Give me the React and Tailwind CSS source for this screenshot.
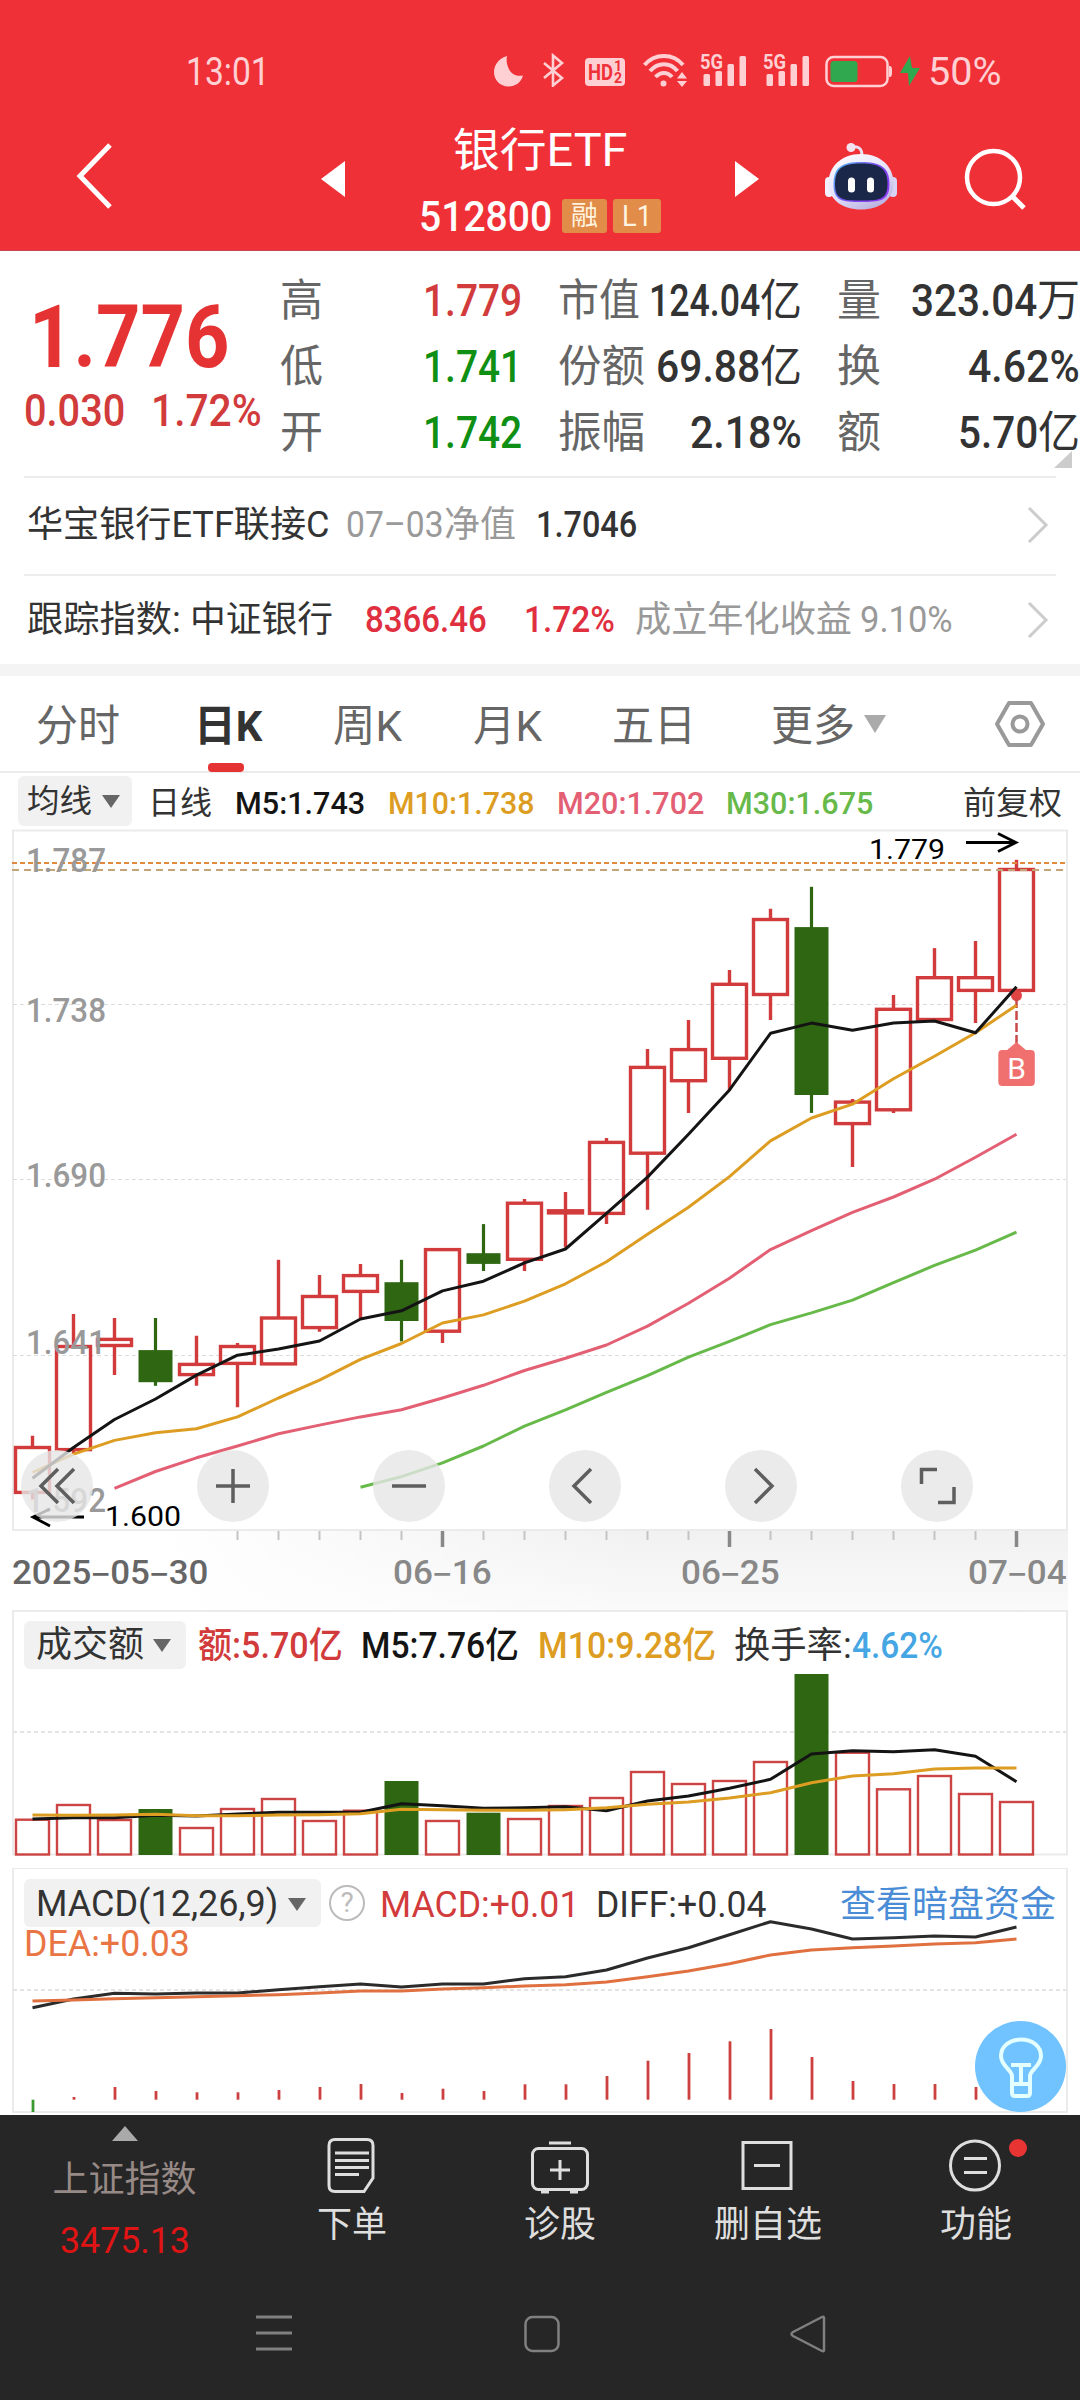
import { useLayoutEffect, useRef } from "react";
import clsx from "clsx";

const STEP = 41;
const FIRST = 32.5;
const xAt = (i) => FIRST + STEP * i;

const RED = "#d23b3b";
const GREEN = "#2f6612";
const BLACK = "#141414";
const ORANGE = "#dd9d22";
const PINK = "#e36074";
const LIME = "#67b94a";

// high, body top, body bottom, low
const candles = [
  [606.8, 618.5, 663.4, 670.6],
  [484.9, 517.5, 620.6, 625.2],
  [489, 510.4, 516.5, 546.1],
  [489, 521.1, 553.2, 556.8, true],
  [506.8, 535.4, 545.6, 556.8],
  [514, 517.5, 534.4, 578.2],
  [430.8, 489, 534.9, 534.9],
  [446.1, 467.5, 498.6, 502.7],
  [434.9, 446.6, 462.4, 489],
  [430.8, 453.2, 492, 512.4, true],
  [420.6, 420.6, 502.2, 514],
  [395.1, 424.2, 434.9, 442, true],
  [370.1, 374.2, 430.3, 442],
  [362.9, 381.8, 383.9, 418.5],
  [308.9, 313.4, 384.4, 395.1],
  [220.1, 238.4, 324.2, 380.8],
  [191, 220.6, 251.7, 283.9],
  [141, 155.3, 229.3, 261.4],
  [79.8, 90.5, 165.5, 191],
  [57.8, 98.1, 266, 283.9, true],
  [270.1, 273.1, 294.6, 337.9],
  [166, 180.3, 280.8, 283.9],
  [119.1, 148.7, 190.5, 190.5],
  [111.9, 148.7, 161.4, 194.1],
  [30.8, 40.5, 161.4, 161.4],
];

const ma5 = [
  649.2, 618.5, 590.5, 570, 546.1, 526.2, 520, 512, 490, 481.8, 461.9, 452.2,
  433.9, 420, 384.4, 348.1, 305.3, 260.9, 204.3, 194.1, 201.2, 194.1, 192,
  203.8, 157.8,
];
const ma10 = [
  643.5, 625.2, 611.4, 603.7, 599.7, 587.9, 569, 551.2, 530.3, 514.5, 494,
  485.9, 472.1, 454.8, 432.8, 405.3, 378.2, 347.6, 311.9, 289, 275.2, 249.7,
  227.2, 203.8, 176.2,
];
const ma20 = [
  659.4, 642.5, 628.8, 617, 604.8, 596.1, 587.9, 580.8, 569, 556.3, 541.5,
  529.3, 516, 497.1, 474.2, 449.2, 420.6, 401.7, 383.3, 368, 350.2, 328.2,
  305.3,
];
const ma30 = [
  658.3, 647.6, 633.9, 617, 597.1, 580.8, 563.4, 546.6, 528.2, 512.4, 495.6,
  483.9, 471.1, 453.7, 436.4, 421.1, 403.2,
];

const volumes = [
  209.7, 195, 210, 199, 218, 199, 189, 211, 200.7, 171, 211, 202.7, 209, 196,
  188, 162, 174, 171, 152, 64, 142.7, 179.3, 166, 184, 192,
];
const volumeM5 = [
  209, 207.7, 207.7, 205.3, 206, 204, 202.3, 202.3, 202.3, 193.7, 195.7, 198.3,
  197.7, 196.7, 200.7, 191, 186, 178.3, 169.3, 144, 140.7, 141.7, 139.7, 146.3,
  171.7,
];
const volumeM10 = [
  205, 205.3, 205, 204.3, 205.7, 205.7, 205, 204.7, 203.7, 199.3, 199.7, 200.3,
  200.3, 199.7, 197.7, 194.3, 192, 188, 182.7, 172.7, 166, 163.7, 159, 158, 158,
];

const diff = [
  139.7, 131, 125.3, 126, 125, 125, 121.7, 118.7, 116, 119, 116, 116, 110.7,
  108.7, 102, 90, 79.7, 66.7, 53.7, 61, 71, 69.7, 68, 69, 59,
];
const dea = [
  133, 132, 130.7, 129.7, 128.7, 127.7, 126.7, 125, 123, 123, 121, 119.7, 118,
  116.7, 114, 108.7, 103, 95.7, 87, 82, 79.7, 78, 76, 74.7, 71,
];
const histogram = [
  244, 229, 219, 223, 224.3, 224.3, 222, 219, 216, 225, 220.7, 223, 216.3,
  216.3, 208, 192.7, 185, 173.3, 161, 189, 213, 216, 216, 219, 207,
];

const priceLabels = [
  ["1.787", 43],
  ["1.738", 193],
  ["1.690", 358.3],
  ["1.641", 525.2],
  ["1.592", 682.8],
];

const points = (values, start = 0) =>
  values.map((v, i) => `${xAt(i + start)},${v}`).join(" ");

// One line of text squeezed to the width of its box.
function Fit({ className, children }) {
  const box = useRef(null);
  const text = useRef(null);

  useLayoutEffect(() => {
    const ratio = box.current.clientWidth / text.current.offsetWidth;
    text.current.style.transform = `scaleX(${ratio})`;
  }, [children]);

  return (
    <span className={clsx("block shrink-0 whitespace-nowrap", className)} ref={box}>
      <span className="inline-block origin-left" ref={text}>
        {children}
      </span>
    </span>
  );
}

function Line({ values, start, color, width = 3 }) {
  return (
    <polyline
      fill="none"
      points={points(values, start)}
      stroke={color}
      strokeLinejoin="round"
      strokeWidth={width}
    />
  );
}

function Caret({ className }) {
  return (
    <svg className={clsx("shrink-0", className)} preserveAspectRatio="none" viewBox="0 0 20 14">
      <path d="M0 0h20L10 14z" fill="currentColor" />
    </svg>
  );
}

function Signal() {
  return (
    <svg className="h-[34px] w-[47px] shrink-0 overflow-visible" fill="#ffd0d3" viewBox="0 0 47 34">
      <text
        fontFamily="Roboto"
        fontSize="20"
        fontWeight="700"
        lengthAdjust="spacingAndGlyphs"
        textLength="23"
        x="0"
        y="16"
      >
        5G
      </text>
      <rect height="12" rx="1.5" width="6.5" x="3.5" y="21" />
      <rect height="15" rx="1.5" width="6.5" x="15.5" y="18" />
      <rect height="22" rx="1.5" width="6.5" x="27.5" y="11" />
      <rect height="30" rx="1.5" width="6.5" x="39.5" y="3" />
    </svg>
  );
}

function StatusBar() {
  return (
    <div className="flex h-[112px] items-start pt-[53px] pl-[186px] text-[#ffd0d3]">
      <Fit className="w-[84px] pt-px text-[38px] leading-9">13:01</Fit>
      <svg className="ml-[223px] h-[34px] w-[32px] shrink-0" viewBox="0 0 32 34">
        <path d="M14 3C4 6 1 14 1 19c0 8 6 14.500 14.500 14.500 7 0 12.500-4 14.500-11C18 25 12 13 14 3z" fill="currentColor" />
      </svg>
      <svg className="ml-[18px] h-[34px] w-[22px] shrink-0" fill="none" stroke="currentColor" strokeWidth="2.600" viewBox="0 0 22 34">
        <path d="M1 10l18 15-9 7.500v-30L19 10 1 25" />
      </svg>
      <svg className="ml-[20px] h-[34px] w-[40px] shrink-0" viewBox="0 0 40 34">
        <rect fill="#ffd0d3" height="28" rx="4" width="40" y="5" />
        <g fill="#ef3138" fontFamily="Roboto" fontWeight="700">
          <text fontSize="22" lengthAdjust="spacingAndGlyphs" textLength="25" x="3" y="27">
            HD
          </text>
          <text fontSize="14" x="29" y="18">
            1
          </text>
          <text fontSize="14" x="29" y="30">
            2
          </text>
        </g>
      </svg>
      <svg className="ml-[18px] h-[34px] w-[45px] shrink-0" fill="none" stroke="currentColor" strokeWidth="4" viewBox="0 0 45 34">
        <path d="M1.500 12c10-12 29-12 38.500 0M7 18c8-9 20-9 27.500 0M12.500 24c5-5.500 12-5.500 16.500 0" />
        <circle cx="20.500" cy="30.500" fill="currentColor" r="3" stroke="none" />
        <path d="M34 25.500l5-6.500 5 6.500zM34 28h10l-5 6z" fill="currentColor" stroke="none" />
      </svg>
      <div className="ml-[12px] flex gap-4">
        <Signal />
        <Signal />
      </div>
      <svg className="ml-[15px] h-[36px] w-[68px] shrink-0" viewBox="0 0 68 36">
        <rect fill="none" height="29" rx="7" stroke="#ffd0d3" strokeWidth="2.500" width="61" x="1.500" y="4" />
        <rect fill="#2fa84f" height="21" rx="3.500" width="27" x="5.500" y="8" />
        <path d="M64 13c3 0 3 2 3 5.500S67 24 64 24z" fill="#ffd0d3" />
      </svg>
      <svg className="ml-[6px] h-[34px] w-[22px] shrink-0" viewBox="0 0 22 34">
        <path d="M11 3L1 20h8l1 13L21 15h-8z" fill="#2fa84f" />
      </svg>
      <Fit className="ml-[7px] w-[74px] pt-px text-[38px] leading-9">50%</Fit>
    </div>
  );
}

function Robot() {
  return (
    <svg className="h-[67px] w-[74px] shrink-0" viewBox="0 0 74 67">
      <defs>
        <linearGradient id="shell" x1="0" x2="0.600" y1="0" y2="1">
          <stop offset="0" stopColor="#ffffff" />
          <stop offset="0.600" stopColor="#e6e2fb" />
          <stop offset="1" stopColor="#bdb6e2" />
        </linearGradient>
        <linearGradient id="glow" x1="0" x2="1" y1="0" y2="0.600">
          <stop offset="0" stopColor="#54c8f2" />
          <stop offset="0.600" stopColor="#7a4df0" />
          <stop offset="1" stopColor="#8c3df5" />
        </linearGradient>
      </defs>
      <path d="M28 4c6-1 10 1 10 9" fill="none" stroke="#eadff2" strokeWidth="3" />
      <circle cx="27" cy="4.500" fill="#f3e3f0" r="4.500" />
      <rect fill="#f3f0ff" height="20" rx="4" width="8" x="1" y="34" />
      <rect fill="#d8d3f5" height="20" rx="4" width="8" x="65" y="34" />
      <path d="M37 11c20 0 32.500 13 32.500 29 0 17-14 26.500-32.500 26.500S4.500 57 4.500 40C4.500 24 17 11 37 11z" fill="url(#shell)" />
      <path d="M37 19c19 0 28.500 5 28.500 22S56 59 37 59 9.500 58 9.500 41 18 19 37 19z" fill="url(#glow)" />
      <path d="M37 20.500c18 0 26.500 4.500 26.500 20.500S55 57.500 37 57.500 11 57 11 41s8-20.500 26-20.500z" fill="#1b2748" />
      <rect fill="#fff" height="15" rx="3.500" width="7" x="24" y="34.500" />
      <rect fill="#fff" height="15" rx="3.500" width="7" x="43" y="34.500" />
    </svg>
  );
}

function Header() {
  return (
    <header className="h-[251px] border-b border-[#c34a55] bg-[#f03037] text-white">
      <StatusBar />
      <div className="flex h-[138px] items-start">
        <svg className="mt-[31px] ml-[75px] h-[66px] w-[38px] shrink-0" fill="none" stroke="currentColor" strokeWidth="5" viewBox="0 0 38 66">
          <path d="M35 2L5 33l30 31" />
        </svg>
        <svg className="mt-[49px] ml-[208px] h-[36px] w-[24px] shrink-0" viewBox="0 0 24 36">
          <path d="M24 0v36L0 18z" fill="currentColor" />
        </svg>
        <div className="ml-[74px] flex w-[242px] shrink-0 flex-col items-center">
          <Fit className="mt-[12px] -ml-px w-[174px] text-[46px] leading-[52px]">银行ETF</Fit>
          <div className="mt-[20px] flex items-center">
            <Fit className="mt-[2px] w-[133px] text-[42px] leading-[38px] font-medium">512800</Fit>
            <div className="ml-[10px] flex gap-[6px] text-[#fff4e0]">
              <span className="flex h-[34px] w-[45px] items-center justify-center rounded-[3px] bg-[#e18c48]">
                <Fit className="w-[27px] text-[27px] leading-8">融</Fit>
              </span>
              <span className="flex h-[34px] w-[48px] items-center justify-center rounded-[3px] bg-[#e18c48]">
                <Fit className="w-[30px] text-[29px] leading-8">L1</Fit>
              </span>
            </div>
          </div>
        </div>
        <svg className="mt-[49px] ml-[74px] h-[36px] w-[24px] shrink-0" viewBox="0 0 24 36">
          <path d="M0 0v36L24 18z" fill="currentColor" />
        </svg>
        <div className="mt-[31px] ml-[65px]">
          <Robot />
        </div>
        <svg className="mt-[35px] ml-[65px] h-[64px] w-[64px] shrink-0" fill="none" stroke="currentColor" strokeWidth="4.500" viewBox="0 0 64 64">
          <circle cx="30.500" cy="30.500" r="26.500" />
          <path d="M49 49l12 12" strokeWidth="5" />
        </svg>
      </div>
    </header>
  );
}

function Quote() {
  return (
    <section className="relative flex h-[225px] pt-[17px] text-[44px] leading-[66px]">
      <div className="w-[280px] shrink-0 font-medium text-[#d23b3b]">
        <Fit className="mt-[34px] ml-[29px] w-[200px] text-[88px] leading-[70px] font-bold text-[#e53333]">1.776</Fit>
        <div className="mt-[6px] ml-[24px] flex font-normal">
          <Fit className="w-[101px] leading-[66px] font-medium">0.030</Fit>
          <Fit className="ml-[26px] w-[111px] leading-[66px] font-medium">1.72%</Fit>
        </div>
      </div>
      <div className="w-[44px] shrink-0 text-[#666]">
        <Fit className="w-[43px]">高</Fit>
        <Fit className="w-[43px]">低</Fit>
        <Fit className="w-[43px]">开</Fit>
      </div>
      <div className="ml-[99px] w-[99px] shrink-0 font-medium text-[#0f8f14]">
        <Fit className="w-[99px] text-[#d23b3b]">1.779</Fit>
        <Fit className="w-[99px]">1.741</Fit>
        <Fit className="w-[99px]">1.742</Fit>
      </div>
      <div className="ml-[36px] w-[86px] shrink-0 text-[#666]">
        <Fit className="w-[82px]">市值</Fit>
        <Fit className="w-[87px]">份额</Fit>
        <Fit className="w-[87px]">振幅</Fit>
      </div>
      <div className="ml-[4px] flex w-[154px] shrink-0 flex-col items-end text-[#333]">
        <div className="flex">
          <Fit className="w-[111px] font-medium">124.04</Fit>
          <Fit className="w-[42px]">亿</Fit>
        </div>
        <div className="flex">
          <Fit className="w-[104px] font-medium">69.88</Fit>
          <Fit className="w-[42px]">亿</Fit>
        </div>
        <Fit className="w-[112px] font-medium">2.18%</Fit>
      </div>
      <div className="ml-[35px] w-[44px] shrink-0 text-[#666]">
        <Fit className="w-[44px]">量</Fit>
        <Fit className="w-[44px]">换</Fit>
        <Fit className="w-[44px]">额</Fit>
      </div>
      <div className="ml-[29px] flex w-[170px] shrink-0 flex-col items-end text-[#333]">
        <div className="flex">
          <Fit className="w-[126px] font-medium">323.04</Fit>
          <Fit className="w-[43px]">万</Fit>
        </div>
        <Fit className="w-[112px] font-medium">4.62%</Fit>
        <div className="flex">
          <Fit className="w-[80px] font-medium">5.70</Fit>
          <Fit className="w-[42px]">亿</Fit>
        </div>
      </div>
      <svg className="absolute right-[8px] bottom-[8px] h-[17px] w-[18px]" viewBox="0 0 18 17">
        <path d="M18 0v17H0z" fill="#ccc" />
      </svg>
    </section>
  );
}

function Chevron() {
  return (
    <svg className="mr-[31px] ml-auto h-[36px] w-[22px] shrink-0" fill="none" stroke="#ccc" strokeWidth="3" viewBox="0 0 22 36">
      <path d="M2 1l17 17L2 35" />
    </svg>
  );
}

function FundRows() {
  return (
    <section className="text-[36px] leading-[50px] text-[#333]">
      <div className="mx-6 h-[2px] bg-[#ededed]" />
      <div className="flex h-[96px] items-center pb-[2px]">
        <Fit className="ml-[27px] w-[303px]">华宝银行ETF联接C</Fit>
        <Fit className="ml-[16px] w-[98px] text-[#999]">07–03</Fit>
        <Fit className="w-[72px] text-[#999]">净值</Fit>
        <Fit className="ml-[20px] w-[101px] font-medium">1.7046</Fit>
        <Chevron />
      </div>
      <div className="mx-6 h-[2px] bg-[#ededed]" />
      <div className="flex h-[88px] items-center">
        <Fit className="ml-[27px] w-[154px]">跟踪指数:</Fit>
        <Fit className="ml-[9px] w-[143px]">中证银行</Fit>
        <Fit className="ml-[32px] w-[122px] font-medium text-[#e02f3e]">8366.46</Fit>
        <Fit className="ml-[37px] w-[91px] font-medium text-[#e02f3e]">1.72%</Fit>
        <Fit className="ml-[20px] w-[217px] text-[#999]">成立年化收益</Fit>
        <Fit className="ml-[8px] w-[93px] text-[#999]">9.10%</Fit>
        <Chevron />
      </div>
      <div className="h-[12px] bg-[#f4f4f4]" />
    </section>
  );
}

function Tabs() {
  return (
    <nav className="flex h-[97px] border-b-2 border-[#ebebeb] pt-[18px] text-[43px] leading-[64px] text-[#666]">
      <Fit className="ml-[36px] w-[84px]">分时</Fit>
      <div className="ml-[74px] w-[68px] shrink-0">
        <Fit className="w-[68px] font-bold text-[#333]">日K</Fit>
        <span className="mt-[5px] ml-[14px] block h-[9px] w-[36px] rounded-[4px] bg-[#e53333]" />
      </div>
      <Fit className="ml-[71px] w-[69px]">周K</Fit>
      <Fit className="ml-[71px] w-[69px]">月K</Fit>
      <Fit className="ml-[70px] w-[84px]">五日</Fit>
      <Fit className="ml-[75px] w-[84px]">更多</Fit>
      <Caret className="mt-[21px] ml-[9px] h-[18px] w-[22px] text-[#aaa]" />
      <svg className="mt-[5px] ml-[108px] h-[50px] w-[52px] shrink-0" fill="none" stroke="#999" strokeLinejoin="round" strokeWidth="4" viewBox="0 0 52 50">
        <path d="M15 4h22l12 21-12 21H15L3 25z" />
        <circle cx="26" cy="25" r="7.500" />
      </svg>
    </nav>
  );
}

function MaRow() {
  return (
    <div className="flex h-[56px] items-start pt-[3px] text-[32px] leading-[54px] text-[#333]">
      <div className="ml-[18px] flex h-[50px] w-[114px] items-center rounded-md bg-[#f1f1f1] pl-[9px]">
        <Fit className="w-[65px]">均线</Fit>
        <Caret className="ml-[10px] h-[13px] w-[18px] text-[#666]" />
      </div>
      <Fit className="ml-[16px] w-[64px]">日线</Fit>
      <Fit className="ml-[23px] w-[130px] font-medium text-[#141414]">M5:1.743</Fit>
      <Fit className="ml-[23px] w-[146px] font-medium text-[#dd9d22]">M10:1.738</Fit>
      <Fit className="ml-[23px] w-[147px] font-medium text-[#e36074]">M20:1.702</Fit>
      <Fit className="ml-[22px] w-[147px] font-medium text-[#67b94a]">M30:1.675</Fit>
      <Fit className="ml-[90px] w-[99px]">前复权</Fit>
    </div>
  );
}

function Candle({ index, data }) {
  const [high, top, bottom, low, falling] = data;
  const x = xAt(index);

  if (falling) {
    return (
      <g fill={GREEN}>
        <rect height={low - high} width="3.200" x={x - 1.6} y={high} />
        <rect height={bottom - top} width="34" x={x - 17} y={top} />
      </g>
    );
  }

  return (
    <g fill="none" stroke={RED} strokeWidth="3.400">
      <path d={`M${x} ${high}V${top}M${x} ${bottom}V${low}`} />
      <rect height={bottom - top} width="34" x={x - 17} y={top} />
    </g>
  );
}

function PriceChart() {
  return (
    <svg className="block h-[702px] w-[1080px] overflow-visible" viewBox="0 0 1080 702">
      <rect fill="none" height="699.500" stroke="#ebebeb" strokeWidth="2" width="1054" x="13" y="1.500" />
      <g stroke="#dcdcdc" strokeDasharray="4 3" strokeWidth="1">
        <path d="M13 175.500H1066M13 350.500H1066M13 526.500H1066" />
      </g>
      {candles.map((data, i) => (
        <Candle data={data} index={i} key={i} />
      ))}
      <path d="M12 34H1066" stroke="#e0883f" strokeDasharray="5 3" strokeWidth="2" />
      <path d="M12 41H1066" stroke="#c4a57a" strokeDasharray="7 5" strokeWidth="2" />
      <g fill="#999" fontFamily="Roboto" fontSize="33" fontWeight="500">
        {priceLabels.map(([label, y]) => (
          <text key={label} lengthAdjust="spacingAndGlyphs" textLength="80" x="26" y={y}>
            {label}
          </text>
        ))}
      </g>
      <Line color={PINK} start={2} values={ma20} />
      <Line color={LIME} start={8} values={ma30} />
      <circle cx="1016.500" cy="166.500" fill="#e04545" r="5.500" />
      <path d="M1016.500 170v44" stroke="#c94848" strokeDasharray="9 3" strokeWidth="2.500" />
      <path d="M1006 222l10.500-9 10.500 9z" fill="#f07070" />
      <rect fill="#f07070" height="36" rx="4" width="36.500" x="998.300" y="221" />
      <text fill="#fff" fontFamily="Roboto" fontSize="30" textAnchor="middle" x="1016.500" y="250">
        B
      </text>
      <Line color={ORANGE} values={ma10} />
      <Line color={BLACK} values={ma5} />
      <g fill="#000" fontFamily="Roboto" fontSize="28">
        <text lengthAdjust="spacingAndGlyphs" textLength="76" x="869" y="30">
          1.779
        </text>
        <text lengthAdjust="spacingAndGlyphs" textLength="76" x="105" y="697">
          1.600
        </text>
      </g>
      <g fill="none" stroke="#000" strokeWidth="2.800">
        <path d="M966 13.500h50M998 4.500l18 9-18 9" />
        <path d="M84 688H34M50 680l-17 8 17 9" />
      </g>
    </svg>
  );
}

const chartButtons = [
  { name: "start", d: "M37 19L20 36l17 17M53 19L36 36l17 17" },
  { name: "zoom in", d: "M19 36h34M36 19v34" },
  { name: "zoom out", d: "M19 36h34" },
  { name: "earlier", d: "M42 19L25 36l17 17" },
  { name: "later", d: "M30 19l17 17-17 17" },
  { name: "full screen", d: "M20.500 34V19.500h15.500M37 52.500h16V37" },
];

function ChartButtons() {
  return (
    <div className="absolute top-[621px] left-[21px] flex gap-[104px]">
      {chartButtons.map((button) => (
        <button
          aria-label={button.name}
          className="size-[72px] rounded-full bg-[#e6e6e6]/80"
          key={button.name}
          type="button"
        >
          <svg className="size-[72px]" fill="none" stroke="#5e5e5e" strokeWidth="3.500" viewBox="0 0 72 72">
            <path d={button.d} />
          </svg>
        </button>
      ))}
    </div>
  );
}

function DateAxis() {
  return (
    <div className="mr-[12px] h-[79px] bg-linear-to-b from-[#f1f1f1] to-[#fafafa]">
      <div className="h-full bg-linear-to-r from-white from-15% to-transparent to-60%">
        <svg className="block h-[17px] w-[1068px]" viewBox="0 0 1068 17">
          {candles.map((_, i) => {
            if (i < 5) return null;
            const major = i === 10 || i === 17 || i === 24;
            return (
              <path
                d={`M${xAt(i)} 0V${major ? 16 : 9}`}
                key={i}
                stroke={major ? "#888" : "#c4c4c4"}
                strokeWidth={major ? 3.5 : 2}
              />
            );
          })}
        </svg>
        <div className="flex text-[34px] leading-[48px] font-medium text-[#888]">
          <Fit className="ml-[12px] w-[196px] text-[#666]">2025‒05‒30</Fit>
          <Fit className="ml-[185px] w-[99px]">06‒16</Fit>
          <Fit className="ml-[189px] w-[99px]">06‒25</Fit>
          <Fit className="ml-[188px] w-[99px]">07‒04</Fit>
        </div>
      </div>
    </div>
  );
}

function VolumePanel() {
  return (
    <section className="relative h-[258px]">
      <svg className="block h-[246px] w-[1080px]" viewBox="0 0 1080 246">
        <rect fill="#fff" height="243.500" stroke="#ebebeb" strokeWidth="2" width="1054" x="13" y="1" />
        <path d="M13 122H1066" stroke="#e4e4e4" strokeDasharray="4 3" strokeWidth="2" />
        {volumes.map((top, i) =>
          candles[i][4] ? (
            <rect fill={GREEN} height={245 - top} key={i} width="34" x={xAt(i) - 17} y={top} />
          ) : (
            <rect
              fill="none"
              height={244.5 - top}
              key={i}
              stroke="#cc4444"
              strokeWidth="2.400"
              width="33"
              x={xAt(i) - 16.5}
              y={top}
            />
          ),
        )}
        <Line color={BLACK} values={volumeM5} />
        <Line color={ORANGE} values={volumeM10} />
      </svg>
      <div className="absolute top-[11px] left-[24px] flex text-[36px] leading-[51px]">
        <div className="flex h-[48px] w-[162px] items-center rounded-md bg-[#f1f1f1] pl-[12px] text-[#333]">
          <Fit className="w-[108px]">成交额</Fit>
          <Caret className="ml-[9px] h-[13px] w-[18px] text-[#666]" />
        </div>
        <Fit className="ml-[12px] w-[145px] font-medium text-[#d23b3b]">额:5.70亿</Fit>
        <Fit className="ml-[18px] w-[158px] font-medium text-[#141414]">M5:7.76亿</Fit>
        <Fit className="ml-[19px] w-[178px] font-medium text-[#dd9d22]">M10:9.28亿</Fit>
        <Fit className="ml-[18px] w-[118px] text-[#333]">换手率:</Fit>
        <Fit className="w-[91px] font-medium text-[#46a6e4]">4.62%</Fit>
      </div>
    </section>
  );
}

function MacdPanel() {
  return (
    <section className="relative h-[247px]">
      <svg className="block h-[247px] w-[1080px]" viewBox="0 0 1080 247">
        <rect fill="#fff" height="244" stroke="#ebebeb" strokeWidth="2" width="1054" x="13" y="0" />
        <path d="M13 122H1066" stroke="#e4e4e4" strokeDasharray="4 3" strokeWidth="2" />
        {histogram.map((y, i) => (
          <path
            d={`M${xAt(i) + 0.5} 231.700V${y}`}
            key={i}
            stroke={i === 0 ? "#3a9a30" : "#cc4040"}
            strokeWidth="2.800"
          />
        ))}
        <Line color="#2b2b2b" values={diff} />
        <Line color="#e0703f" values={dea} />
      </svg>
      <div className="absolute top-[11px] left-[24px] flex text-[36px] leading-[52px]">
        <div className="flex h-[48px] w-[297px] items-center rounded-md bg-[#f1f1f1] pt-[2px] pl-[12px] text-[#333]">
          <Fit className="w-[242px]">MACD(12,26,9)</Fit>
          <Caret className="ml-[10px] h-[13px] w-[18px] text-[#666]" />
        </div>
        <span className="mt-[6px] ml-[8px] flex size-[36px] items-center justify-center rounded-full border-[2.5px] border-[#bbb] text-[28px] leading-none text-[#bbb]">
          ?
        </span>
        <Fit className="ml-[15px] w-[199px] text-[#d23b3b]">MACD:+0.01</Fit>
        <Fit className="ml-[17px] w-[171px] text-[#333]">DIFF:+0.04</Fit>
        <Fit className="ml-[73px] w-[216px] text-[#4a8cd6]">查看暗盘资金</Fit>
      </div>
      <div className="absolute top-[51px] left-[24px] text-[36px] leading-[50px] text-[#e97545]">
        <Fit className="w-[166px]">DEA:+0.03</Fit>
      </div>
      <svg className="absolute top-[153px] left-[975px] size-[91px]" fill="none" stroke="#e4ffff" strokeWidth="4" viewBox="0 0 91 91">
        <circle cx="45.500" cy="45.500" fill="#70c3ff" r="45.500" stroke="none" />
        <path d="M37 63v-8c0-6-11-10-11-20 0-10 9-16.500 20-16.500S66 25 66 35c0 10-11 14-11 20v17c0 2-1 3-3 3H40c-2 0-3-1-3-3v-9h18M36 44h20M46 44v18" strokeLinejoin="round" />
      </svg>
    </section>
  );
}

function NavItem({ className, children, labelClass, label }) {
  return (
    <div className={clsx("flex w-[110px] shrink-0 flex-col items-center text-[#dedede]", className)}>
      <svg className="mt-[20px] h-[60px] w-[110px]" fill="none" stroke="currentColor" strokeWidth="3" viewBox="0 0 110 60">
        {children}
      </svg>
      <Fit className={clsx("mt-[5px] text-[36px] leading-[50px]", labelClass)}>{label}</Fit>
    </div>
  );
}

function BottomNav() {
  return (
    <footer className="h-[285px] bg-[#262626]">
      <div className="flex h-[180px]">
        <div className="flex w-[249px] shrink-0 flex-col items-center">
          <Caret className="mt-[11px] h-[15px] w-[26px] rotate-180 text-[#aaa]" />
          <Fit className="mt-[14px] w-[144px] text-[36px] leading-[50px] text-[#978a86]">上证指数</Fit>
          <Fit className="mt-[11px] w-[130px] text-[36px] leading-[50px] text-[#e01414]">3475.13</Fit>
        </div>
        <NavItem className="ml-[48px]" label="下单" labelClass="w-[70px]">
          <path d="M38 4.500h32q6 0 6 6V43L67 56.500H38q-6 0-6-6v-40q0-6 6-6zM38 18h34M38 25.500h34M38 32.500h34M38 39.500h24" />
        </NavItem>
        <NavItem className="ml-[98px]" label="诊股" labelClass="w-[72px]">
          <rect height="41" rx="6" width="55" x="27.500" y="13.500" />
          <path d="M44 8h22M36 57h8M65 57h8M55 25v20M45 35h20" />
        </NavItem>
        <NavItem className="ml-[98px]" label="删自选" labelClass="w-[108px]">
          <path d="M30 7.500h48v46H30zM41 30.500h26" />
        </NavItem>
        <NavItem className="ml-[98px]" label="功能" labelClass="w-[72px]">
          <circle cx="54" cy="30.500" r="24.500" />
          <path d="M43 23.500h23M43 37.500h23" />
          <circle cx="97" cy="13" fill="#e93434" r="9" stroke="none" />
        </NavItem>
      </div>
      <div className="flex items-center pt-[19px] text-[#808080]">
        <svg className="ml-[254px] h-[40px] w-[40px]" fill="none" stroke="currentColor" strokeWidth="3" viewBox="0 0 40 40">
          <path d="M2 3h36M2 19h36M2 35h36" />
        </svg>
        <svg className="ml-[228px] h-[40px] w-[40px]" fill="none" stroke="currentColor" strokeWidth="2.500" viewBox="0 0 40 40">
          <rect height="34" rx="7" width="33" x="3.500" y="3" />
        </svg>
        <svg className="ml-[226px] h-[40px] w-[40px]" fill="none" stroke="currentColor" strokeLinejoin="round" strokeWidth="2.500" viewBox="0 0 40 40">
          <path d="M34 3q2-1 2 1v32q0 2-2 1L5 22q-3-2 0-4z" />
        </svg>
      </div>
    </footer>
  );
}

export default function App() {
  return (
    <main className="flex h-[2400px] w-[1080px] flex-col overflow-hidden bg-white font-['Roboto','Noto_Sans_CJK_SC',sans-serif]">
      <Header />
      <Quote />
      <FundRows />
      <Tabs />
      <MaRow />
      <div className="relative">
        <PriceChart />
        <ChartButtons />
      </div>
      <DateAxis />
      <VolumePanel />
      <MacdPanel />
      <BottomNav />
    </main>
  );
}
